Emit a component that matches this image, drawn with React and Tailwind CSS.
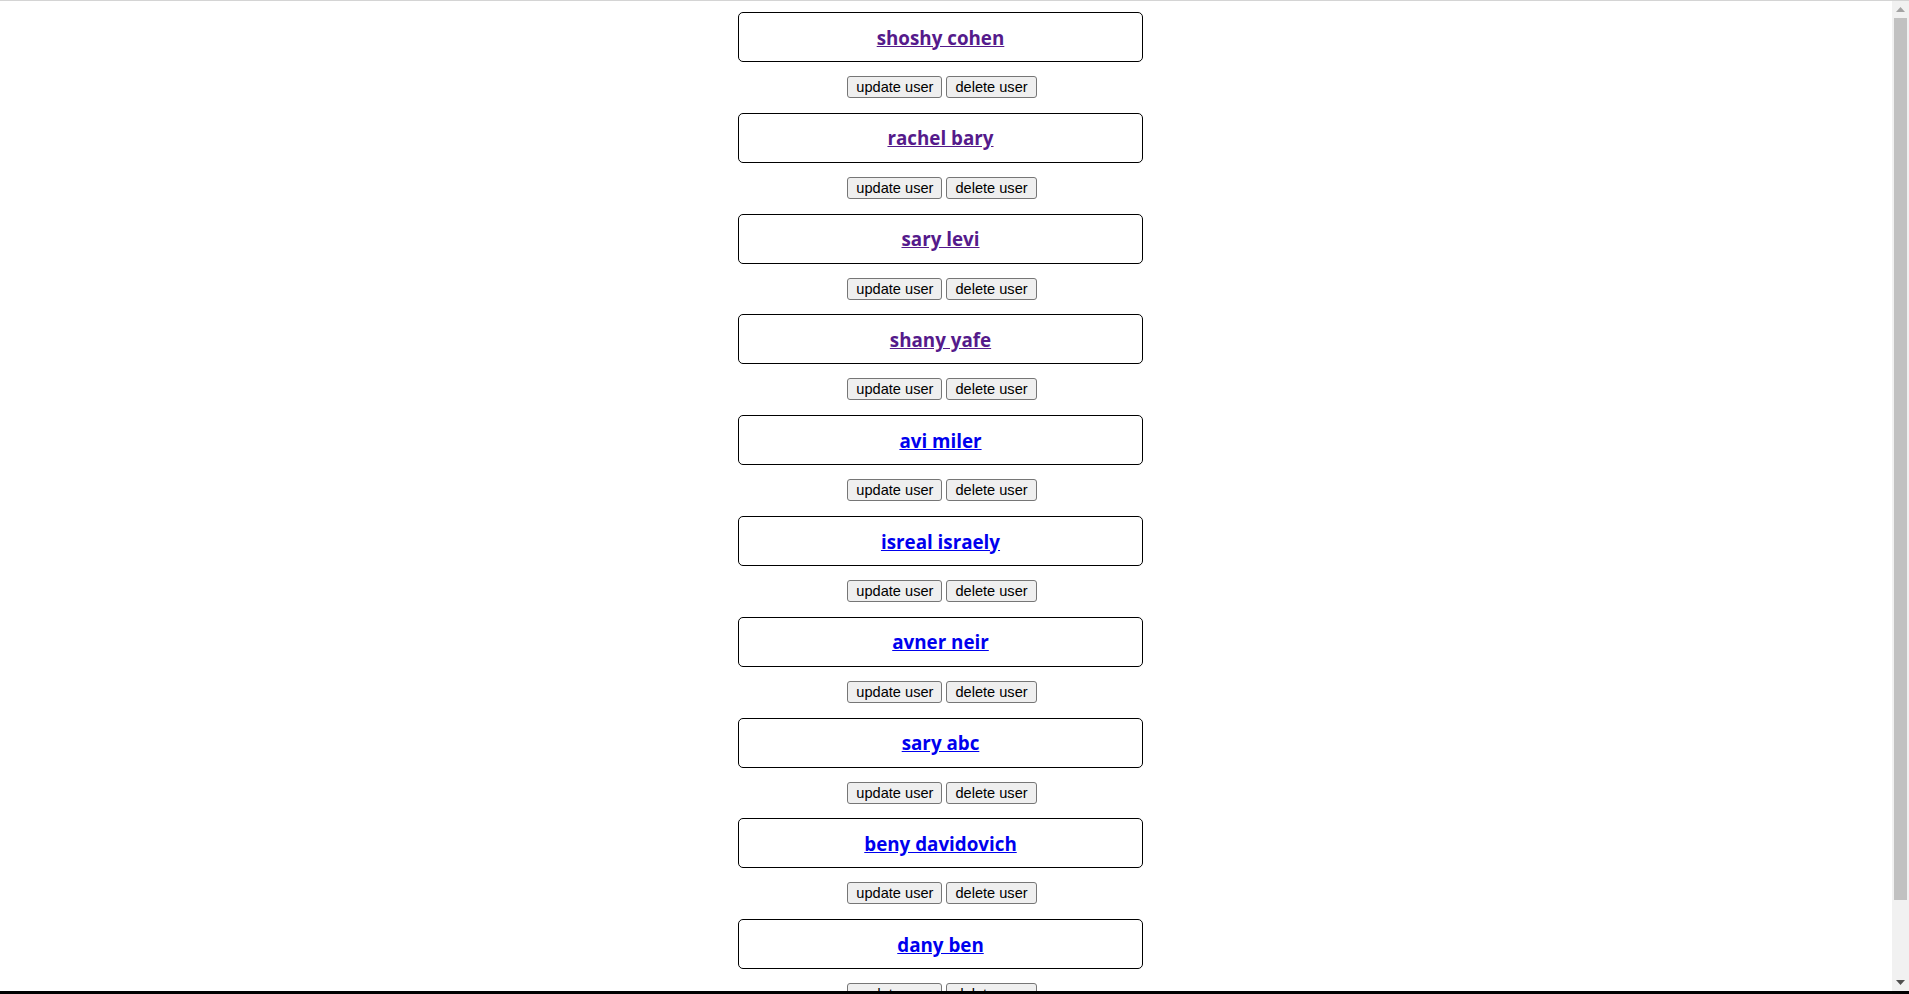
import React from "react";

const users = [
  { name: "shoshy cohen", visited: true },
  { name: "rachel bary", visited: true },
  { name: "sary levi", visited: true },
  { name: "shany yafe", visited: true },
  { name: "avi miler", visited: false },
  { name: "isreal israely", visited: false },
  { name: "avner neir", visited: false },
  { name: "sary abc", visited: false },
  { name: "beny davidovich", visited: false },
  { name: "dany ben", visited: false },
  { name: "moshe levi", visited: false },
];

function Btn({ children }) {
  return (
    <button
      className="h-[22px] px-[8px] bg-[#efefef] border border-[#767676] rounded-[3px] text-[14.6px] leading-[18px] text-black"
      style={{ fontFamily: '"Liberation Sans", Arial, sans-serif' }}
    >
      {children}
    </button>
  );
}

export default function App() {
  return (
    <div className="w-[1909px] h-[994px] flex flex-col overflow-hidden bg-white">
      <div className="h-px bg-[#d4d4d4] shrink-0" />
      <div className="flex-1 flex flex-row min-h-0">
        <div className="flex-1 overflow-hidden">
          <div className="flex flex-col items-center pr-[11px] pt-[11px]">
            {users.map((u) => (
              <div key={u.name} className="flex flex-col items-center">
                <div className="w-[405px] h-[50px] border border-black rounded-[5px] flex items-center justify-center pt-[2px]">
                  <a
                    href="#"
                    className={
                      "font-bold text-[18.8px] underline leading-none " +
                      (u.visited ? "text-[#551a8b]" : "text-[#0000ee]")
                    }
                    style={{ fontFamily: '"Open Sans", "Noto Sans", sans-serif' }}
                  >
                    {u.name}
                  </a>
                </div>
                <div className="flex flex-row gap-[4px] mt-[14px] mb-[14.8px] pl-[3px]">
                  <Btn>update user</Btn>
                  <Btn>delete user</Btn>
                </div>
              </div>
            ))}
          </div>
        </div>
        <div className="w-[17px] shrink-0 bg-[#f1f1f1] flex flex-col items-center">
          <div className="h-[17px] w-full flex items-center justify-center">
            <svg width="9" height="5" viewBox="0 0 9 5">
              <polygon points="0,5 9,5 4.5,0" fill="#a3a3a3" />
            </svg>
          </div>
          <div className="flex-1 w-[13px] bg-[#c1c1c1] mb-[74px]" />
          <div className="h-[17px] w-full flex items-center justify-center">
            <svg width="9" height="5" viewBox="0 0 9 5">
              <polygon points="0,0 9,0 4.5,5" fill="#505050" />
            </svg>
          </div>
        </div>
      </div>
      <div className="h-[3px] bg-black shrink-0" />
    </div>
  );
}
